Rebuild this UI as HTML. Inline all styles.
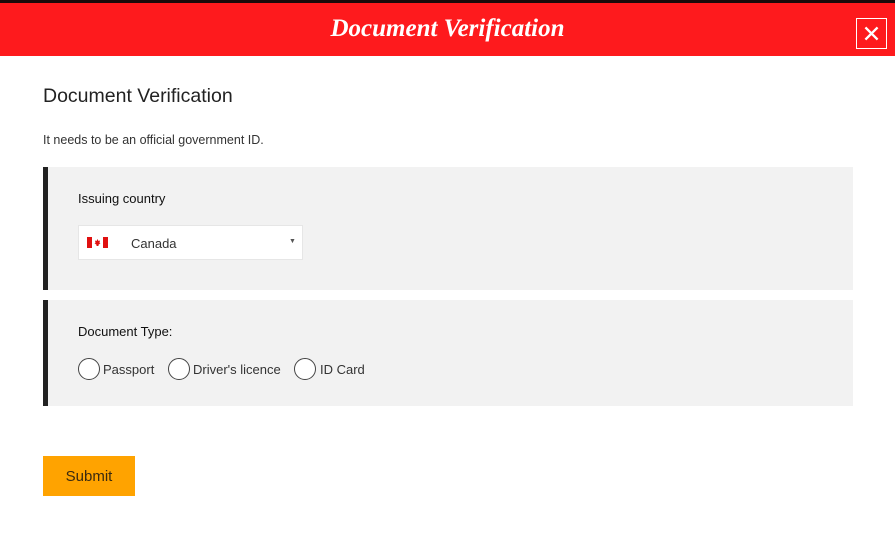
<!DOCTYPE html>
<html><head><style>
*{margin:0;padding:0;box-sizing:border-box}
body{width:895px;height:556px;background:#fff;font-family:"Liberation Sans",sans-serif;color:#222;position:relative;overflow:hidden}
.top{position:absolute;left:0;top:0;width:895px;height:3px;background:#1a0a0a}
.hdr{position:absolute;left:0;top:3px;width:895px;height:53px;background:#fe1a1d}
.ttl{position:absolute;left:0;width:895px;top:12px;text-align:center;color:#fff;font:italic bold 25px "Liberation Serif",serif}
.x{position:absolute;left:856px;top:15px;width:31px;height:31px;border:1px solid #fff}
.h1{position:absolute;left:43px;top:85px;font-size:19.5px;color:#222}
.p{position:absolute;left:43px;top:133px;font-size:12.5px;color:#333}
.panel{position:absolute;left:43px;width:810px;background:#f2f2f2;border-left:5px solid #222}
.lbl{position:absolute;left:30px;font-size:13px;color:#111}
.sel{position:absolute;left:30px;top:58px;width:225px;height:35px;background:#fff;border:1px solid #e6e6e6}
.r{position:absolute;top:58px;width:22px;height:22px;border:1px solid #444;border-radius:50%;background:#fff}
.rt{position:absolute;top:62px;font-size:13px;color:#333}
.btn{position:absolute;left:43px;top:456px;width:92px;height:40px;background:#ffa300;color:#3a2a10;font-size:15px;text-align:center;line-height:42px}
</style></head><body>
<div class="top"></div>
<div class="hdr"><div class="ttl">Document Verification</div>
<svg class="x" viewBox="0 0 31 31"><path d="M9 9L22 22M22 9L9 22" stroke="#fff" stroke-width="2.5"/></svg></div>
<div class="h1">Document Verification</div>
<div class="p">It needs to be an official government ID.</div>
<div class="panel" style="top:167px;height:123px">
<div class="lbl" style="top:24px">Issuing country</div>
<div class="sel">
<svg style="position:absolute;left:8px;top:11px" width="21" height="11" viewBox="0 0 21 11"><rect width="21" height="11" fill="#fff"/><rect width="5" height="11" fill="#e01010"/><rect x="16" width="5" height="11" fill="#e01010"/><path d="M10.5 2l1 2 1.5-.5-.5 2.5 1 .3-2 1.5v1.2h-2V7.8l-2-1.5 1-.3-.5-2.5 1.5.5z" fill="#e01010"/></svg>
<span style="position:absolute;left:52px;top:10px;font-size:13px;color:#333">Canada</span>
<span style="position:absolute;left:210px;top:12px;font-size:7px;color:#555">▼</span>
</div></div>
<div class="panel" style="top:300px;height:106px">
<div class="lbl" style="top:24px">Document Type:</div>
<div class="r" style="left:30px"></div><div class="rt" style="left:55px">Passport</div>
<div class="r" style="left:120px"></div><div class="rt" style="left:145px">Driver's licence</div>
<div class="r" style="left:246px"></div><div class="rt" style="left:272px">ID Card</div>
</div>
<div class="btn">Submit</div>
</body></html>
